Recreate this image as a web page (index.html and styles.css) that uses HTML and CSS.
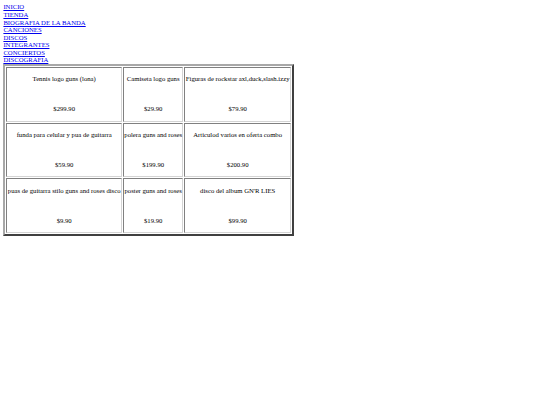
FILE: index.html
```html
<!DOCTYPE html>
<html>
<head>
<meta charset="utf-8">
<link rel="stylesheet" href="styles.css">
</head>
<body class="page">
<nav class="menu">
<a class="link" href="#">INICIO</a>
<a class="link" href="#">TIENDA</a>
<a class="link" href="#">BIOGRAFIA DE LA BANDA</a>
<a class="link" href="#">CANCIONES</a>
<a class="link" href="#">DISCOS</a>
<a class="link" href="#">INTEGRANTES</a>
<a class="link" href="#">CONCIERTOS</a>
<a class="link" href="#">DISCOGRAFIA</a>
</nav>
<table class="shop">
<tr>
<td class="item"><p class="name">Tennis logo guns (lona)</p><div class="pic"></div><p class="price">$299.90</p></td>
<td class="item"><p class="name">Camiseta logo guns</p><div class="pic"></div><p class="price">$29.90</p></td>
<td class="item"><p class="name">Figuras de rockstar axl,duck,slash.izzy</p><div class="pic"></div><p class="price">$79.90</p></td>
</tr>
<tr>
<td class="item"><p class="name">funda para celular y pua de guitarra</p><div class="pic"></div><p class="price">$59.90</p></td>
<td class="item"><p class="name">polera guns and roses</p><div class="pic"></div><p class="price">$199.90</p></td>
<td class="item"><p class="name">Articulod varios en oferta combo</p><div class="pic"></div><p class="price">$200.90</p></td>
</tr>
<tr>
<td class="item"><p class="name">puas de guitarra stilo guns and roses disco</p><div class="pic"></div><p class="price">$9.90</p></td>
<td class="item"><p class="name">poster guns and roses</p><div class="pic"></div><p class="price">$19.90</p></td>
<td class="item"><p class="name">disco del album GN'R LIES</p><div class="pic"></div><p class="price">$99.90</p></td>
</tr>
</table>
</body>
</html>
```

FILE: styles.css
```css
.page {
  margin: 3.4px;
  font-family: "Liberation Serif", "Times New Roman", serif;
  font-size: 6.7px;
  line-height: 7.57px;
  color: #000;
  background: #fff;
}
.menu {
  display: flex;
  flex-direction: column;
  align-items: flex-start;
}
.link {
  color: #0000ee;
  text-decoration: underline;
  line-height: 7.57px;
}
.shop {
  border-style: solid;
  border-width: 2px;
  border-color: #a8a8a8 #404040 #404040 #a8a8a8;
  border-spacing: 1px;
  border-collapse: separate;
  font-size: 6.7px;
}
.item {
  border-style: solid;
  border-width: 1px;
  border-color: #808080 #d4d4d4 #d4d4d4 #808080;
  padding: 0.4px;
  text-align: center;
  vertical-align: middle;
  white-space: nowrap;
}
.name {
  margin: 6.75px 0;
  line-height: 7.57px;
}
.pic {
  height: 9.4px;
}
.price {
  margin: 6.75px 0 7.2px;
  line-height: 7.57px;
}
```
